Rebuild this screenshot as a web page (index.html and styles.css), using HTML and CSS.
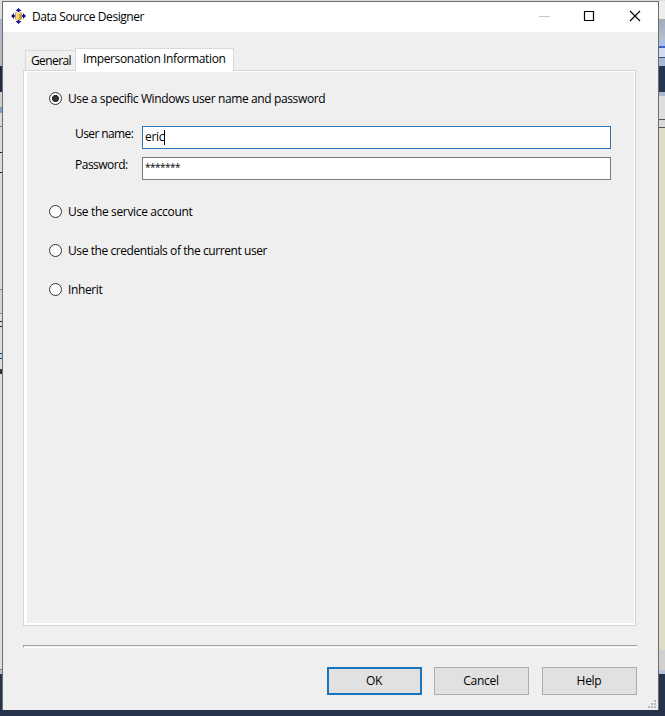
FILE: index.html
```
<!DOCTYPE html>
<html lang="en">
<head>
<meta charset="utf-8">
<title>Data Source Designer</title>
<link rel="stylesheet" href="styles.css">
</head>
<body>
<div class="desktop">
  <div class="edge edge-left"></div>
  <main class="dialog">
    <header class="titlebar">
      <svg class="app-icon" width="16" height="16" viewBox="0 0 16 16">
        <path fill="#1812a0" d="M8.500 0l3 3h-2v1h-2V3h-2zM8.500 16l3-3h-2v-1h-2v1h-2zM1 8l3-3v2h1v2H4v2zM16 8l-3-3v2h-1v2h1v2z"/>
        <path fill="#c9a03a" d="M5 4.500q3.500-1.500 7 0v7q-3.500 1.500-7 0z"/>
        <path fill="#f3dc7e" d="M6 5h3v6.500H6z"/>
        <ellipse cx="8.500" cy="5" rx="3" ry="1" fill="#f0dc90"/>
      </svg>
      <h1 class="title">Data Source Designer</h1>
      <svg class="controls" width="106" height="14" viewBox="0 0 106 14" fill="none">
        <path stroke="#c4c4c4" d="M2 7.500h11"/>
        <path stroke="#000" stroke-width="1.200" d="M47.500 2.500h9v9h-9z"/>
        <path stroke="#000" stroke-width="1.200" d="M93 2l10 10M103 2L93 12"/>
      </svg>
    </header>
    <nav class="tabs">
      <span class="tab general">General</span>
      <span class="tab active">Impersonation Information</span>
    </nav>
    <section class="panel">
      <div class="option"><i class="radio checked"></i><span>Use a specific Windows user name and password</span></div>
      <div class="field"><span class="label user">User name:</span><div class="input focused"><span>eric</span><i class="caret"></i></div></div>
      <div class="field"><span class="label">Password:</span><div class="input stars"><span>*******</span></div></div>
      <div class="option service"><i class="radio"></i><span>Use the service account</span></div>
      <div class="option credentials"><i class="radio"></i><span>Use the credentials of the current user</span></div>
      <div class="option"><i class="radio"></i><span>Inherit</span></div>
    </section>
    <div class="separator"></div>
    <footer class="buttons">
      <div class="button primary">OK</div>
      <div class="button">Cancel</div>
      <div class="button help">Help</div>
    </footer>
    <svg class="grip" width="9" height="9" viewBox="0 0 9 9" fill="#b8b8b8"><path d="M6 0h2v2H6zM3 3h2v2H3zM6 3h2v2H6zM0 6h2v2H0zM3 6h2v2H3zM6 6h2v2H6z"/></svg>
  </main>
  <div class="edge edge-right"></div>
</div>
</body>
</html>
```
FILE: styles.css
```
* { box-sizing: border-box; }
body { margin: 0; background: #26334c; color: #000; font: 12px/16px "Open Sans", "Noto Sans", sans-serif; overflow: hidden; }
.desktop { display: flex; width: 665px; height: 716px; border-top: 1px solid #dcdcdc; }
.edge-left {
  width: 2px;
  background: linear-gradient(#dedede 0 18px, #b0b5d2 18px 40px, #b4bac4 40px 65px, #202b4b 65px 91px, #cdcdcd 91px 106px, #7f9dd0 106px 112px, #dcdcdc 112px 125px, #777 125px 126px, #dcdcdc 126px 151px, #222 151px 152px, #dcdcdc 152px 171px, #222 171px 172px, #dcdcdc 172px 288px, #888 288px 289px, #d2d2d2 289px 312px, #888 312px 313px, #ddd 313px 320px, #222 320px 321px, #ddd 321px 325px, #222 325px 326px, #ddd 326px 352px, #246 352px 353px, #bcd7e8 353px 357px, #246 357px 358px, #ddd 358px 368px, #333 368px 373px, #ddd 373px 668px, #777 668px 669px, #b9bdcb 669px 673px, #26334c 673px);
}
.edge-right {
  width: 6px;
  background: linear-gradient(#ededed 0 18px, #9faabb 18px, #b6c1ce 39px, #aabfe7 39px 45px, #3565c5 45px 47px, #d1dcf3 47px 56px, #3f4f70 56px 57px, #a9b8d6 57px 65px, #263453 65px 91px, #aab6d0 91px 95px, #dedede 95px 118px, #555 118px 119px, #d9d9d9 119px 126px, #555 126px 127px, #dedbc9 127px 649px, #d0d0d0 649px 669px, #bac0d9 669px 673px, #26334c 673px);
}
.dialog { position: relative; width: 657px; height: 709px; display: flex; flex-direction: column; background: #efefef; border: 1px solid #6d6d6d; border-bottom: 0; }
.titlebar { height: 30px; flex: none; display: flex; align-items: center; background: #fff; padding: 0 15px 2px 7px; }
.title { margin: 1px 0 0 6px; font-size: 12px; font-weight: 400; line-height: 16px; flex: 1; white-space: nowrap; letter-spacing: -.44px; }
.tabs { display: flex; align-items: flex-end; flex: none; height: 39px; margin-left: 22px; position: relative; z-index: 1; margin-bottom: -1px; }
.tab { border: 1px solid #d9d9d9; border-bottom: 0; white-space: nowrap; }
.general { width: 50px; height: 20px; margin-bottom: 1px; padding: 2px 0 0 5px; background: #f0f0f0; border-right: 0; letter-spacing: -.6px; }
.active { width: 159px; height: 23px; padding: 2px 0 0 7px; background: #fff; letter-spacing: -.38px; }
.panel { flex: none; width: 613px; height: 556px; margin-left: 20px; border: 1px solid #d5d5d5; box-shadow: inset 3px 0 #fff, inset -1px 0 #fff, inset 0 1px #fff, inset 0 -2px #fff; padding: 20px 24px 0 25px; }
.option { height: 16px; display: flex; align-items: flex-start; margin-bottom: 23px; white-space: nowrap; letter-spacing: -.38px; }
.option:first-child { margin-bottom: 19px; }
.credentials { letter-spacing: -.42px; }
.radio { width: 13px; height: 13px; flex: none; border: 1px solid #333; border-radius: 50%; background: #fff; margin: 1px 6px 0 0; }
.checked { background: radial-gradient(circle, #333 0 3.200px, #fff 3.900px); }
.field { display: flex; height: 23px; margin: 0 0 8px 26px; letter-spacing: -.5px; }
.label { width: 67px; white-space: nowrap; }
.user { letter-spacing: -.6px; }
.input { flex: 1; display: flex; align-items: center; background: #fff; border: 1px solid #7a7a7a; padding: 0 0 1px 2px; letter-spacing: -.3px; }
.focused { border-color: #2e75b5; }
.stars { font-size: 10px; letter-spacing: -.5px; padding-bottom: 4px; }
.caret { width: 1px; height: 15px; background: #000; }
.service { margin-top: 24px; letter-spacing: -.34px; }
.separator { flex: none; height: 3px; margin: 19px 21px 0 20px; border-top: 1px solid #a0a0a0; border-left: 1px solid #a0a0a0; border-bottom: 1px solid #fff; }
.buttons { display: flex; justify-content: flex-end; gap: 12px; margin: 19px 21px 0 0; }
.button { width: 95px; height: 28px; border: 1px solid #adadad; background: #e1e1e1; text-align: center; line-height: 25px; letter-spacing: -.3px; padding-right: 1px; }
.primary { border: 2px solid #1874bd; line-height: 23px; }
.help { margin-left: 1px; }
.grip { position: absolute; right: 1px; bottom: 1px; }
```
